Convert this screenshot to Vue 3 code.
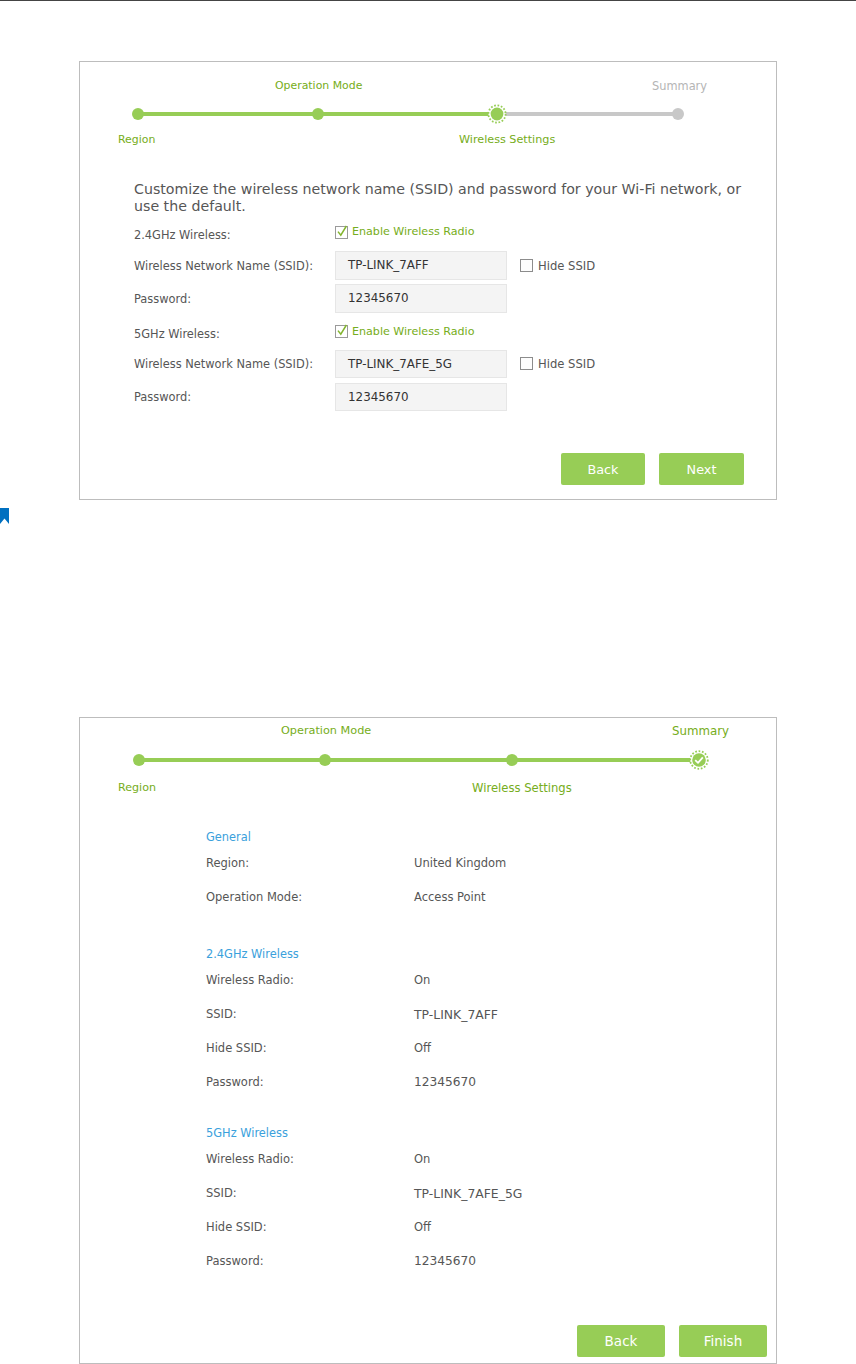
<script setup>
const bands = [
  { label: '2.4GHz Wireless:', ssid: 'TP-LINK_7AFF', pass: '12345670', cls: 'band-a' },
  { label: '5GHz Wireless:', ssid: 'TP-LINK_7AFE_5G', pass: '12345670', cls: 'band-b' }
]
const summary = [
  { title: 'General', cls: 's-general', rows: [['Region:', 'United Kingdom'], ['Operation Mode:', 'Access Point']] },
  { title: '2.4GHz Wireless', cls: 's-24', rows: [['Wireless Radio:', 'On'], ['SSID:', 'TP-LINK_7AFF', 'wide'], ['Hide SSID:', 'Off'], ['Password:', '12345670', 'num']] },
  { title: '5GHz Wireless', cls: 's-5', rows: [['Wireless Radio:', 'On'], ['SSID:', 'TP-LINK_7AFE_5G', 'wide'], ['Hide SSID:', 'Off'], ['Password:', '12345670', 'num']] }
]
</script>

<template>
  <div class="page">
    <div class="topline"></div>

    <section class="card card-one">
      <div class="labels-top one-top">
        <span class="green op">Operation Mode</span>
        <span class="grey sum">Summary</span>
      </div>
      <div class="track one-track">
        <i class="dot"></i><i class="bar b1"></i>
        <i class="dot"></i><i class="bar b2"></i>
        <svg class="ring" width="20" height="20" viewBox="0 0 20 20">
          <circle cx="10" cy="10" r="8.6" fill="#fff" stroke="#97cd56" stroke-width="1.8" stroke-dasharray="1.7 1.7" />
          <circle cx="10" cy="10" r="6.4" fill="#97cd56" />
        </svg>
        <i class="bar off b3"></i>
        <i class="dot off"></i>
      </div>
      <div class="labels-bottom one-bottom">
        <span class="green region">Region</span>
        <span class="green ws">Wireless Settings</span>
      </div>

      <p class="intro">Customize the wireless network name (SSID) and password for your Wi-Fi network, or use the default.</p>

      <div v-for="b in bands" :key="b.label" class="band" :class="b.cls">
        <div class="row radio-row">
          <span class="lbl radio-lbl">{{ b.label }}</span>
          <span class="check-wrap green">
            <svg class="box" width="14" height="14" viewBox="0 0 14 14">
              <rect x="0.5" y="1.5" width="12" height="12" fill="#fff" stroke="#9a9a9a" />
              <path d="M3 6.6 L5.8 10.2 L11.4 1" fill="none" stroke="#83b52e" stroke-width="1.5" />
            </svg>
            <span>Enable Wireless Radio</span>
          </span>
        </div>
        <div class="row">
          <span class="lbl">Wireless Network Name (SSID):</span>
          <span class="field">{{ b.ssid }}</span>
          <span class="hide">
            <svg class="box" width="13" height="13" viewBox="0 0 13 13">
              <rect x="0.5" y="0.5" width="12" height="12" fill="#fdfdfd" stroke="#8c8c8c" />
            </svg>
            <span>Hide SSID</span>
          </span>
        </div>
        <div class="row">
          <span class="lbl">Password:</span>
          <span class="field">{{ b.pass }}</span>
        </div>
      </div>

      <div class="actions one-actions">
        <button class="btn small w84">Back</button>
        <button class="btn small w85">Next</button>
      </div>
    </section>

    <svg class="bookmark" width="9" height="16" viewBox="0 0 9 16">
      <path d="M0 0H9V16L4.5 10.5L0 16Z" fill="#0070c0" />
    </svg>

    <section class="card card-two">
      <div class="labels-top two-top">
        <span class="green op2">Operation Mode</span>
        <span class="green sum2">Summary</span>
      </div>
      <div class="track two-track">
        <i class="dot"></i><i class="bar b4"></i>
        <i class="dot"></i><i class="bar b5"></i>
        <i class="dot"></i><i class="bar b6"></i>
        <svg class="ring" width="20" height="20" viewBox="0 0 20 20">
          <circle cx="10" cy="10" r="8.8" fill="#fff" stroke="#97cd56" stroke-width="1.8" stroke-dasharray="1.7 1.7" />
          <circle cx="10" cy="10" r="6.8" fill="#97cd56" />
          <path d="M6.2 10.2 L9 12.8 L13.8 7.4" fill="none" stroke="#fff" stroke-width="1.8" />
        </svg>
      </div>
      <div class="labels-bottom two-bottom">
        <span class="green region2">Region</span>
        <span class="green ws2">Wireless Settings</span>
      </div>

      <div class="summary">
        <div v-for="g in summary" :key="g.title" class="group" :class="g.cls">
          <h3 class="s-title">{{ g.title }}</h3>
          <div v-for="r in g.rows" :key="r[0]" class="s-row">
            <span class="s-key">{{ r[0] }}</span>
            <span class="s-val" :class="r[2]">{{ r[1] }}</span>
          </div>
        </div>
      </div>

      <div class="actions two-actions">
        <button class="btn w88">Back</button>
        <button class="btn w88">Finish</button>
      </div>
    </section>
  </div>
</template>

<style scoped>
.page {
  width: 856px;
  height: 1364px;
  overflow: hidden;
  background: #fff;
  font-family: "DejaVu Sans", Verdana, sans-serif;
  font-size: 11.4px;
  color: #565656;
}
.topline { height: 1px; background: #444; }
.card {
  box-sizing: border-box;
  width: 698px;
  margin-left: 79px;
  border: 1px solid #bdbdbd;
}
.card-one { margin-top: 60px; height: 439px; }
.card-two { margin-top: 193px; height: 647px; }
.bookmark { display: block; margin-top: 8px; }
.green { color: #76ad20; }
.grey { color: #b5b5b5; }
.labels-top, .labels-bottom { display: flex; line-height: 16px; height: 16px; white-space: nowrap; }
.one-top { padding: 16px 0 0 195px; }
.op { width: 377px; font-size: 10.9px; }
.sum { font-size: 11.4px; }
.two-top { padding: 5px 0 0 201px; }
.op2 { width: 391px; font-size: 11.25px; }
.sum2 { font-size: 11.8px; }
.track { display: flex; align-items: center; height: 14px; }
.one-track { margin: 13px 0 0 52px; }
.two-track { margin: 14px 0 0 53px; }
.dot { display: block; flex: none; width: 12px; height: 12px; border-radius: 50%; background: #97cd56; }
.dot.off { background: #c8c8c8; }
.bar { display: block; flex: none; height: 4px; background: #97cd56; margin: 0 -1px; }
.bar.off { background: #c8c8c8; }
.b1 { width: 170px; }
.b2 { width: 166px; }
.b3 { width: 168px; }
.b4 { width: 176px; }
.b5 { width: 177px; }
.b6 { width: 174px; }
.ring { display: block; flex: none; margin: -3px -1px; position: relative; z-index: 1; }
.one-bottom { margin-top: 11px; padding-left: 38px; }
.region { width: 341px; font-size: 10.9px; }
.ws { font-size: 11.2px; }
.two-bottom { margin-top: 13px; padding-left: 38px; }
.region2 { width: 354px; font-size: 11.1px; }
.ws2 { font-size: 11.6px; }
.intro {
  margin: 33px 0 0 54px;
  width: 622px;
  font-size: 14.2px;
  line-height: 17px;
}
.band { margin-left: 54px; }
.row { display: flex; align-items: center; height: 33px; }
.radio-row { height: 32px; }
.band-a .radio-row { height: 34px; padding-bottom: 1px; box-sizing: border-box; }
.lbl { width: 201px; flex: none; padding-top: 1px; }
.radio-lbl { padding-top: 6px; }
.check-wrap { display: flex; align-items: center; gap: 3px; font-size: 11.1px; }
.box { display: block; flex: none; }
.field {
  box-sizing: border-box;
  width: 172px;
  height: 29px;
  background: #f4f4f4;
  border: 1px solid #e6e6e6;
  color: #333;
  line-height: 27px;
  padding-left: 12px;
  flex: none;
  font-size: 11.9px;
}
.band-b .field { height: 28px; line-height: 26px; }
.hide { display: flex; align-items: center; gap: 5px; margin-left: 13px; font-size: 11.6px; }
.actions { display: flex; gap: 14px; justify-content: flex-end; }
.one-actions { margin-top: 40px; padding-right: 32px; }
.two-actions { margin-top: 47px; padding-right: 9px; }
.btn {
  box-sizing: border-box;
  height: 32px;
  border: 0;
  border-radius: 2px;
  background: #97cd56;
  color: #fff;
  font: 13.5px "DejaVu Sans", Verdana, sans-serif;
  padding: 0;
}
.btn.small { font-size: 12.8px; }
.w84 { width: 84px; }
.w85 { width: 85px; }
.w88 { width: 88px; }
.summary { margin: 33px 0 0 126px; }
.group { display: flex; flex-direction: column; }
.s-title { margin: 0; font-weight: normal; font-size: 11.4px; line-height: 16px; height: 17px; color: #3ba1dc; }
.s-row { display: flex; align-items: center; height: 34px; }
.s-key { width: 208px; flex: none; font-size: 11.5px; }
.s-val { font-size: 11.5px; }
.s-val.wide { font-size: 12.4px; }
.s-val.num { font-size: 12.2px; }
.s-24 { margin-top: 32px; }
.s-5 { margin-top: 26px; }
</style>
